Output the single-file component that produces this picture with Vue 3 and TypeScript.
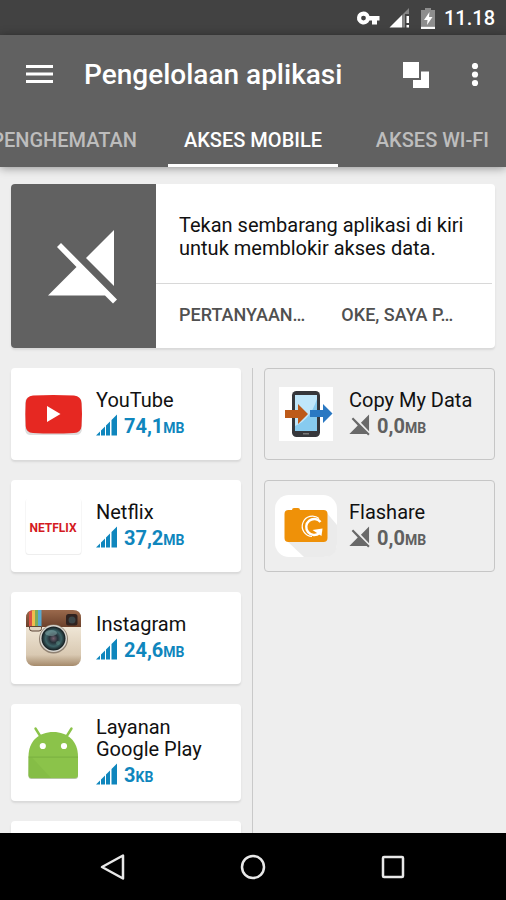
<script setup lang="ts">
type IconName = 'youtube' | 'netflix' | 'instagram' | 'android' | 'copy' | 'flashare'

interface AppUsage {
  name: string
  icon: IconName
  amount: string
  unit: string
}

const allowed: AppUsage[] = [
  { name: 'YouTube', icon: 'youtube', amount: '74,1', unit: 'MB' },
  { name: 'Netflix', icon: 'netflix', amount: '37,2', unit: 'MB' },
  { name: 'Instagram', icon: 'instagram', amount: '24,6', unit: 'MB' },
  { name: 'Layanan Google Play', icon: 'android', amount: '3', unit: 'KB' },
]

const blocked: AppUsage[] = [
  { name: 'Copy My Data', icon: 'copy', amount: '0,0', unit: 'MB' },
  { name: 'Flashare', icon: 'flashare', amount: '0,0', unit: 'MB' },
]

const columns = [
  { id: 'allowed', apps: allowed },
  { id: 'blocked', apps: blocked },
]
</script>

<template>
  <div class="screen">
    <div class="status">
      <svg class="status-key" viewBox="0 0 24 16">
        <path fill="#fff" fill-rule="evenodd" d="M7.500 1.500a6.500 6.500 0 1 0 6 9H16v4h5v-4h2.500V6H13.500a6.500 6.500 0 0 0-6-4.500zM7.500 5.700a2.400 2.400 0 1 1 0 4.800 2.400 2.400 0 0 1 0-4.800z" />
      </svg>
      <svg class="status-signal" viewBox="0 0 22 20">
        <path fill="#858585" d="M20 0V6H16V19.500H13V7z" />
        <path fill="#fff" d="M13 7V19.500H0.500z" />
        <path fill="#fff" d="M17.500 8h2.500v7h-2.500zM17.500 17h2.500v2.500h-2.500z" />
      </svg>
      <svg class="status-battery" viewBox="0 0 14 21">
        <path fill="#8d8d8d" d="M4 0h6v2h4v16H0V2h4z" />
        <path fill="#fff" d="M0 18.500h14V21H0zM8.500 4L3 12h3.500L6 17l5.500-8H8z" />
      </svg>
      <span>11.18</span>
    </div>

    <header class="header">
      <div class="appbar">
        <button class="icon-button" type="button" aria-label="Menu">
          <svg width="28" height="20" viewBox="0 0 28 20">
            <path fill="#fff" d="M0 0h27v3H0zM0 7.500h27v3H0zM0 15h27v3H0z" />
          </svg>
        </button>
        <h1>Pengelolaan aplikasi</h1>
        <button class="icon-button" type="button" aria-label="Widget">
          <svg width="26" height="26" viewBox="0 0 26 26">
            <path fill="#fff" d="M0 0h16v16H0zM18 9.500h8V26H10v-8h8z" />
          </svg>
        </button>
        <button class="icon-button more" type="button" aria-label="Opsi">
          <svg width="8" height="24" viewBox="0 0 8 24">
            <g fill="#fff"><circle cx="4" cy="3" r="3.100" /><circle cx="4" cy="11.500" r="3.100" /><circle cx="4" cy="20" r="3.100" /></g>
          </svg>
        </button>
      </div>
      <nav class="tabs">
        <button class="tab" type="button">PENGHEMATAN</button>
        <button class="tab active" type="button">AKSES MOBILE</button>
        <button class="tab last" type="button">AKSES WI-FI</button>
      </nav>
    </header>

    <main class="content">
      <section class="hint">
        <div class="hint-art">
          <svg width="72" height="76" viewBox="1 0 72 76">
            <path fill="#fff" d="M67 2v56L39 30zM1 67.500L29.500 39 10 19l4-4L70 71.500l-4 4-8-8z" />
          </svg>
        </div>
        <div class="hint-body">
          <p>Tekan sembarang aplikasi di kiri untuk memblokir akses data.</p>
          <div class="hint-actions">
            <button type="button">PERTANYAAN…</button>
            <button type="button">OKE, SAYA P…</button>
          </div>
        </div>
      </section>

      <section class="columns">
        <div v-for="column in columns" :key="column.id" class="column" :class="column.id">
          <button v-for="app in column.apps" :key="app.name" class="card" type="button">
            <svg class="app-icon" viewBox="0 0 64 64">
              <g v-if="app.icon === 'youtube'">
                <path fill="#ddd" d="M9 15h46q6 0 6 7v24q0 7-6 7H9q-5 0-5-7V22q0-7 5-7z" />
                <path fill="#e62822" d="M12 13.500Q32 12.500 53 13.500Q60 14 60.500 21Q61.500 32 60.500 44Q60 50.500 53 51Q32 52 12 51Q5 50.500 4.700 44Q4 32 4.700 21Q5 14 12 13.500z" />
                <path fill="#fff" d="M26 24v16l13.500-8z" />
              </g>
              <g v-else-if="app.icon === 'netflix'">
                <rect x="4.500" y="5" width="56" height="56" rx="3" fill="#eee" />
                <rect x="5" y="4" width="55" height="56" rx="3" fill="#fff" />
                <text class="netflix" x="32" y="38" text-anchor="middle">NETFLIX</text>
              </g>
              <g v-else-if="app.icon === 'instagram'">
                <defs>
                  <linearGradient id="ig-base" x1="0" y1="0" x2="0" y2="1">
                    <stop offset="0.300" stop-color="#efe6d6" /><stop offset="0.800" stop-color="#d9c9b2" /><stop offset="1" stop-color="#a58a6b" />
                  </linearGradient>
                  <linearGradient id="ig-top" x1="0" y1="0" x2="0" y2="1">
                    <stop offset="0" stop-color="#9a694c" /><stop offset="1" stop-color="#6b402a" />
                  </linearGradient>
                  <radialGradient id="ig-lens">
                    <stop offset="0" stop-color="#75606f" /><stop offset="0.350" stop-color="#263139" /><stop offset="0.650" stop-color="#3d6468" /><stop offset="1" stop-color="#12191c" />
                  </radialGradient>
                </defs>
                <rect x="5" y="4" width="55" height="56" rx="8" fill="url(#ig-base)" />
                <path fill="url(#ig-top)" d="M5 21v-9Q5 4 13 4h39q8 0 8 8v9z" />
                <path fill="#d95145" d="M8 6q1-1 3-1.500V21H8z" />
                <path fill="#efbd4d" d="M11 4.500L14 4v17h-3z" />
                <path fill="#7eac58" d="M14 4h3v17h-3z" />
                <path fill="#58a9d0" d="M17 4h3.500v17H17z" />
                <path fill="#dfd4c2" stroke="#5d4536" stroke-width="1" d="M8.500 20.500h12v2q0 2.500-2.500 2.500h-7q-2.500 0-2.500-2.500z" />
                <rect x="45" y="8" width="11.500" height="11.500" rx="2.500" fill="#30221f" />
                <circle cx="51" cy="14" r="3.500" fill="#3c4649" />
                <circle cx="32.500" cy="33" r="14.500" fill="#8f8172" />
                <circle cx="32.500" cy="32.500" r="13.500" fill="#d8d6d0" />
                <circle cx="32.500" cy="32.500" r="12" fill="url(#ig-lens)" />
                <ellipse cx="30" cy="27" rx="6" ry="3" fill="#8cb1b1" opacity="0.500" />
                <circle cx="37" cy="37" r="2" fill="#58877e" opacity="0.600" />
              </g>
              <g v-else-if="app.icon === 'android'">
                <path stroke="#8bc34a" stroke-width="2.400" stroke-linecap="round" d="M14.500 7.500l5 8M50.500 7.500l-5 8" />
                <path fill="#b5c5a1" d="M7.500 37h49.500v18q0 3-3 3h-43.500q-3 0-3-3z" />
                <path fill="#8bc34a" d="M7.500 35.500C7.500 20 18 11 32.300 11S57 20 57 35.500V54q0 3-3 3h-43.500q-3 0-3-3z" />
                <path fill="#7cb342" d="M7.500 35.500h49.500v1.200H7.500z" />
                <path fill="#7cb342" opacity="0.400" d="M8 36.500h3L30 57H10.500q-3 0-3-3z" />
                <circle cx="21.800" cy="25" r="3.100" fill="#fff" /><circle cx="43" cy="25" r="3.100" fill="#fff" />
              </g>
              <g v-else-if="app.icon === 'copy'">
                <path fill="#fff" d="M5 5h54v54H5z" />
                <rect x="18" y="9" width="28" height="46" rx="4.500" fill="#36373b" />
                <path fill="#bfe6fa" d="M21 13h22v36H21z" />
                <path fill="#87cbef" d="M43 17v32H21v-5Q36 38 43 17z" />
                <path fill="#777" d="M29 51h6v1.500h-6z" />
                <path fill="#bd5a19" d="M11 28h13v-6l10 10-10 10v-6H11z" />
                <path fill="#2a78c2" d="M36 28h13v-6l9.500 9.500L49 41v-6H36z" />
              </g>
              <g v-else>
                <rect x="1" y="1" width="62" height="62" rx="14" fill="#fff" />
                <path fill="#ebebeb" d="M52 18L63 31v18q0 14-14 14H30L12 46z" />
                <path fill="#ef9108" d="M18 16q0-2 2-2h4q2 0 2 2h23.500q4 0 4 4v24q0 4-4 4h-35q-4 0-4-4V20q0-4 4-4z" />
                <path fill="none" stroke="#fff" stroke-width="1.200" d="M45 24.500A10.200 10.200 0 1 0 38 42.500" />
                <path fill="none" stroke="#fff" stroke-width="2.400" d="M46.500 28A8 8 0 1 0 45.500 39" />
                <path fill="#fff" d="M38.500 36l10-1.500-1 7.500-3-2z" />
              </g>
            </svg>
            <span class="info">
              <span class="name">{{ app.name }}</span>
              <span class="usage">
                <svg v-if="column.id === 'allowed'" class="signal" viewBox="0 0 21 22">
                  <path fill="#0f86bd" d="M0 21.500L4 17.500v4zM5 16.500l4-4v9H5zM10 11.500l4-4v14h-4zM15.500 6L21 .5v21h-5.500z" />
                </svg>
                <svg v-else class="signal" viewBox="0 0 72 76">
                  <path fill="#696969" d="M69 2v58L41 30zM1 69L30 40 9 17l5-5L71 69l-5 5-5-5z" />
                </svg>
                <span class="amount">{{ app.amount }}<small>{{ app.unit }}</small></span>
              </span>
            </span>
          </button>
          <div v-if="column.id === 'allowed'" class="card"></div>
        </div>
      </section>
    </main>

    <nav class="system">
      <button type="button" aria-label="Kembali">
        <svg width="28" height="28" viewBox="0 0 28 28"><path class="nav-line" d="M3 14L24 2.500v23z" /></svg>
      </button>
      <button type="button" aria-label="Beranda">
        <svg width="28" height="28" viewBox="0 0 28 28"><circle class="nav-line" cx="14" cy="14" r="11" /></svg>
      </button>
      <button type="button" aria-label="Terbaru">
        <svg width="28" height="28" viewBox="0 0 28 28"><rect class="nav-line" x="4" y="4" width="20" height="20" rx="1" /></svg>
      </button>
    </nav>
  </div>
</template>

<style>
body {
  margin: 0;
  background: #eee;
}
</style>

<style scoped>
.screen {
  display: flex;
  flex-direction: column;
  height: 100vh;
  overflow: hidden;
  background: #eee;
  color: #111;
  font-family: Roboto, "Liberation Sans", sans-serif;
}
button {
  margin: 0;
  padding: 0;
  border: 0;
  background: none;
  color: inherit;
  font: inherit;
  text-align: left;
  cursor: pointer;
}
svg {
  display: block;
  flex: none;
}
.status {
  display: flex;
  flex: none;
  align-items: center;
  justify-content: flex-end;
  height: 35px;
  padding: 1px 11px 0 0;
  box-sizing: border-box;
  background: #424242;
  color: #fff;
  font-size: 20px;
  font-weight: 500;
}
.status-key { width: 24px; height: 16px; margin-right: 9px; }
.status-signal { width: 22px; height: 20px; margin-right: 10px; }
.status-battery { width: 14px; height: 21px; margin-right: 9px; }
.header {
  position: relative;
  flex: none;
  background: #616161;
  color: #fff;
  box-shadow: 0 1px 9px rgba(0, 0, 0, 0.4);
}
.appbar {
  display: flex;
  align-items: center;
  height: 79px;
  padding: 0 27px 0 26px;
}
.icon-button {
  display: flex;
  align-items: center;
  height: 48px;
}
.more { margin-left: 42px; }
h1 {
  flex: 1;
  margin: 0 0 0 30px;
  font-size: 28px;
  font-weight: 500;
  line-height: 32px;
  white-space: nowrap;
}
.tabs {
  display: grid;
  grid-template-columns: 1fr 170px 1fr;
  height: 53px;
}
.tab {
  display: flex;
  align-items: center;
  justify-content: flex-end;
  overflow: hidden;
  padding: 0 31px 2px 0;
  color: #bdbdbd;
  font-size: 20px;
  font-weight: 500;
  white-space: nowrap;
}
.tab.last { padding-right: 17px; }
.tab.active {
  justify-content: center;
  padding: 0 0 2px;
  color: #fff;
  box-shadow: inset 0 -3px #fff;
}
.content {
  display: flex;
  flex: 1;
  flex-direction: column;
  gap: 20px;
  min-height: 0;
  overflow: hidden;
  padding: 17px 11px 0;
}
.hint {
  display: flex;
  flex: none;
  height: 164px;
  overflow: hidden;
  border-radius: 4px;
  background: #fff;
  box-shadow: 0 2px 2px #d8d8d8;
}
.hint-art {
  display: flex;
  align-items: center;
  justify-content: center;
  width: 145px;
  background: #616161;
}
.hint-body {
  display: flex;
  flex: 1;
  flex-direction: column;
  min-width: 0;
  padding-right: 3px;
}
.hint-body p {
  flex: 1;
  margin: 0;
  padding: 30px 18px 0 23px;
  font-size: 20px;
  line-height: 23px;
}
.hint-actions {
  display: flex;
  align-items: center;
  gap: 36px;
  height: 60px;
  padding: 0 0 4px 23px;
  border-top: 1px solid #d8d8d8;
  color: #505050;
  font-size: 18px;
  font-weight: 500;
  white-space: nowrap;
}
.columns {
  display: grid;
  flex: 1;
  grid-template-columns: 1fr 1fr;
  min-height: 0;
}
.column {
  display: flex;
  flex-direction: column;
  gap: 20px;
}
.column.allowed {
  padding-right: 11px;
}
.column.blocked {
  padding-left: 11px;
  border-left: 1px solid #c9c9c9;
}
.columns {
  grid-template-columns: 241px 1fr;
}
.card {
  display: flex;
  flex: none;
  align-items: center;
  gap: 11px;
  min-height: 92px;
  box-sizing: border-box;
  padding: 12px 10px;
  border-radius: 4px;
  background: #fff;
  box-shadow: 0 2px 2px #d8d8d8;
}
.blocked .card {
  padding: 11px 9px;
  border: 1px solid #c6c6c6;
  background: none;
  box-shadow: none;
}
.app-icon {
  width: 64px;
  height: 64px;
}
.netflix {
  fill: #d41a22;
  font-family: "Liberation Sans Narrow", Roboto, sans-serif;
  font-size: 12px;
  font-weight: 700;
}
.info {
  display: flex;
  flex: 1;
  flex-direction: column;
}
.name {
  font-size: 20px;
  line-height: 22px;
}
.usage {
  display: flex;
  align-items: flex-start;
  gap: 7px;
  padding-top: 3px;
  color: #0f86bd;
  font-size: 20px;
  font-weight: 700;
  line-height: 24px;
}
.usage small { font-size: 14px; }
.blocked .usage { color: #606060; }
.signal {
  width: 21px;
  height: 22px;
}
.system {
  display: flex;
  flex: none;
  align-items: center;
  justify-content: center;
  gap: 80px;
  height: 67px;
  background: #000;
}
.system button {
  display: flex;
  align-items: center;
  justify-content: center;
  width: 60px;
  height: 48px;
}
.nav-line {
  fill: none;
  stroke: #e8e8e8;
  stroke-width: 2.5;
  stroke-linejoin: round;
}
</style>
